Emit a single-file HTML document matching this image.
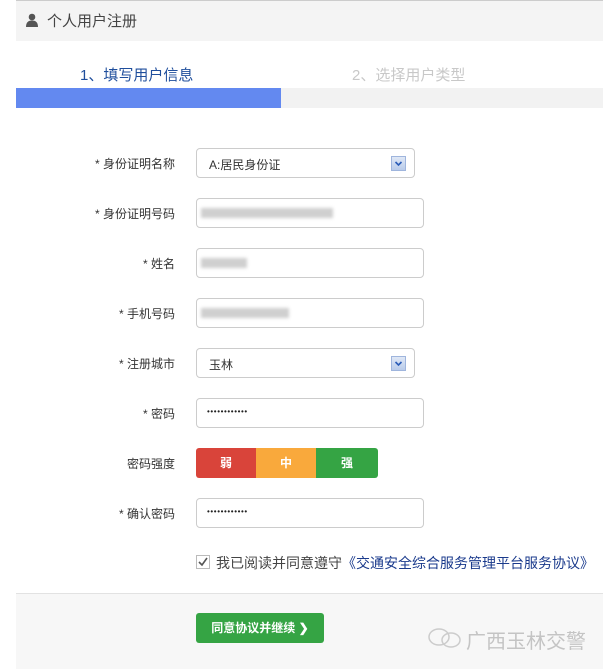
<!DOCTYPE html>
<html><head><meta charset="utf-8"><style>
*{margin:0;padding:0;box-sizing:border-box}
body{width:603px;height:669px;background:#fff;font-family:"Liberation Sans","Noto Sans CJK SC",sans-serif;position:relative;overflow:hidden;color:#333}
.abs{position:absolute}
.hdr{left:16px;top:0;width:587px;height:41px;background:#f4f4f4;border-top:1px solid #ccc}
.lbl{position:absolute;right:428px;font-size:12px;color:#333;text-align:right;white-space:nowrap}
.inp{position:absolute;left:196px;width:228px;height:30px;border:1px solid #ccc;border-radius:4px;background:#fff}
.sel{width:219px}
.arrow{position:absolute;right:8px;top:7px;width:15px;height:15px;background:linear-gradient(#dfe8f6,#b8cbea);border:1px solid #9fb5dd}
.blur{position:absolute;background:#cfcfcf;height:10px;top:9px;filter:blur(1.5px)}
.dots{position:absolute;left:10px;top:8px;font-size:8px;letter-spacing:0.6px;color:#222}
</style></head><body>
<div class="abs hdr"></div>
<svg class="abs" style="left:26px;top:13px" width="12" height="14" viewBox="0 0 12 14"><circle cx="6" cy="4" r="3.3" fill="#555"/><path d="M0 14 Q0 7.5 6 7.5 Q12 7.5 12 14Z" fill="#555"/></svg>
<div class="abs" style="left:47px;top:10px;font-size:15px;color:#444">个人用户注册</div>
<div class="abs" style="left:80px;top:64px;font-size:15px;color:#1f4e9c">1、填写用户信息</div>
<div class="abs" style="left:352px;top:64px;font-size:15px;color:#c8c8c8">2、选择用户类型</div>
<div class="abs" style="left:16px;top:88px;width:265px;height:20px;background:#6389f0"></div>
<div class="abs" style="left:281px;top:88px;width:322px;height:20px;background:#f2f2f2"></div>

<div class="lbl" style="top:155px">* 身份证明名称</div>
<div class="inp sel" style="top:148px"><span class="abs" style="left:12px;top:7px;font-size:12px">A:居民身份证</span><div class="arrow"><svg width="13" height="13" style="position:absolute;left:0;top:0"><path d="M3.5 5l3 3 3-3" stroke="#2a5cb8" stroke-width="1.6" fill="none"/></svg></div></div>
<div class="lbl" style="top:205px">* 身份证明号码</div>
<div class="inp" style="top:198px"><div class="blur" style="left:4px;width:132px"></div></div>
<div class="lbl" style="top:255px">* 姓名</div>
<div class="inp" style="top:248px"><div class="blur" style="left:4px;width:46px"></div></div>
<div class="lbl" style="top:305px">* 手机号码</div>
<div class="inp" style="top:298px"><div class="blur" style="left:4px;width:88px"></div></div>
<div class="lbl" style="top:355px">* 注册城市</div>
<div class="inp sel" style="top:348px"><span class="abs" style="left:12px;top:7px;font-size:12px">玉林</span><div class="arrow"><svg width="13" height="13" style="position:absolute;left:0;top:0"><path d="M3.5 5l3 3 3-3" stroke="#2a5cb8" stroke-width="1.6" fill="none"/></svg></div></div>
<div class="lbl" style="top:405px">* 密码</div>
<div class="inp" style="top:398px"><span class="dots">••••••••••••</span></div>
<div class="lbl" style="top:455px">密码强度</div>
<div class="abs" style="left:196px;top:448px;width:182px;height:30px;border-radius:3px;overflow:hidden;display:flex;font-size:12px;font-weight:bold;color:#fff;line-height:30px;text-align:center">
<div style="width:60px;background:#d9443a">弱</div><div style="width:60px;background:#f9a93c">中</div><div style="width:62px;background:#35a444">强</div></div>
<div class="lbl" style="top:505px">* 确认密码</div>
<div class="inp" style="top:498px"><span class="dots">••••••••••••</span></div>

<svg class="abs" style="left:196px;top:555px" width="14" height="14"><rect x=".5" y=".5" width="13" height="13" fill="#fff" stroke="#bbb"/><path d="M3 7l3 3 5-7" stroke="#555" stroke-width="1.6" fill="none"/></svg>
<div class="abs" style="left:216px;top:553px;font-size:14px;color:#444;white-space:nowrap">我已阅读并同意遵守<span style="color:#1a3a8c">《交通安全综合服务管理平台服务协议》</span></div>
<div class="abs" style="left:16px;top:593px;width:587px;height:76px;background:#f7f7f7;border-top:1px solid #e2e2e2"></div>
<div class="abs" style="left:196px;top:613px;width:128px;height:30px;background:#35a444;border-radius:3px;color:#fff;font-size:12px;font-weight:bold;line-height:30px;text-align:center">同意协议并继续 ❯</div>
<svg class="abs" style="left:427px;top:627px" width="36" height="22"><ellipse cx="12" cy="10" rx="10" ry="8" fill="none" stroke="#ccc" stroke-width="1.5"/><ellipse cx="24" cy="13" rx="9" ry="7" fill="none" stroke="#ccc" stroke-width="1.5"/></svg>
<div class="abs" style="left:466px;top:625px;font-size:20px;color:#c4c4c4;white-space:nowrap">广西玉林交警</div>
</body></html>
